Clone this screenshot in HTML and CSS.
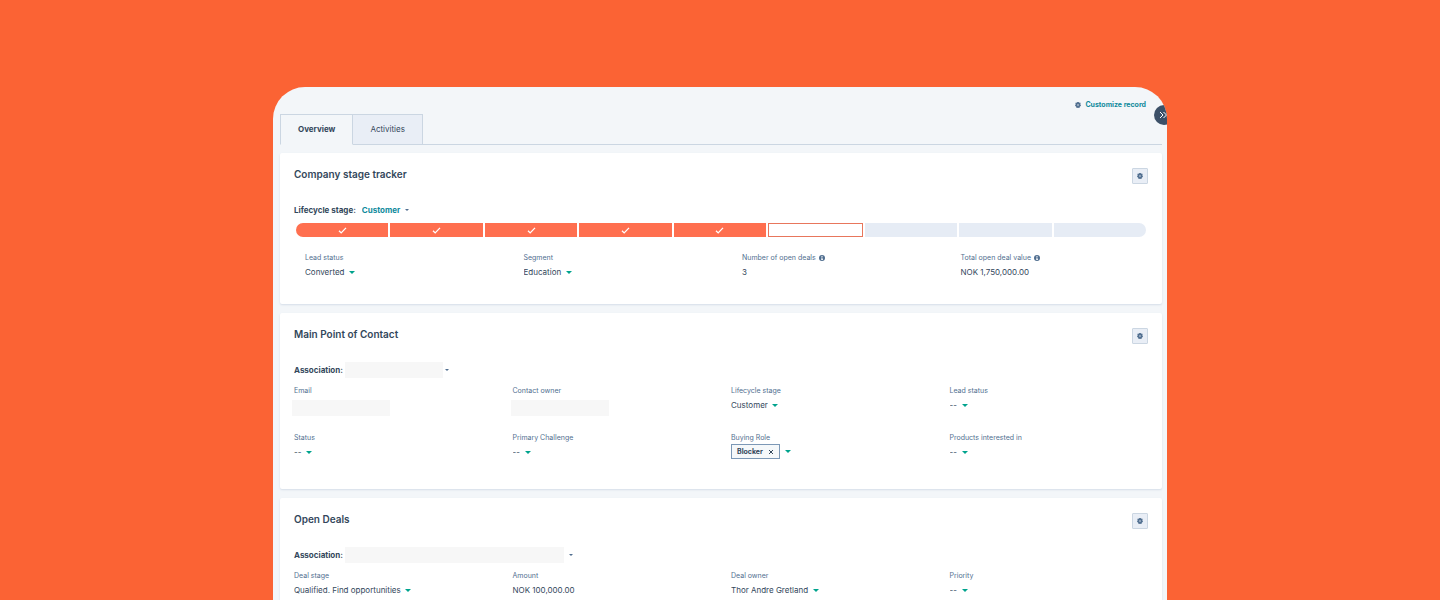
FILE: index.html
```
<!DOCTYPE html>
<html lang="en">
  <head>
    <meta charset="utf-8" />
    <title>Company record</title>
    <link rel="stylesheet" href="styles.css">
  </head>
  <body>
    <svg class="sprite" aria-hidden="true">
      <symbol id="gear" viewBox="0 0 16 16">
        <path fill="currentColor" fill-rule="evenodd" d="M6 0h4l.5 1.500 1.500.7 1.700-.6 1.400 2.400-1 1.500.5 1.500 1.400 1-1 3-1.500.5-.8 1.500.2 1.700L10 16l-1.300-1H7.300L6 16l-2.900-1.300.2-1.700-.8-1.500L1 11 0 8l1.400-1 .5-1.500-1-1.500 1.400-2.400 1.700.6 1.500-.7zM8 6a2 2 0 1 0 0 4 2 2 0 0 0 0-4z"/>
      </symbol>
      <symbol id="check" viewBox="0 0 10 8">
        <path fill="none" stroke="currentColor" stroke-width="1.500" d="M1 4.200 3.500 6.700 9 1"/>
      </symbol>
      <symbol id="info" viewBox="0 0 12 12">
        <circle cx="6" cy="6" r="6" fill="currentColor"/>
        <path fill="#fff" d="M5 2h2v2H5zM4.500 5H7v3.500h1V10H4.300V8.500H5v-2h-.5z"/>
      </symbol>
    </svg>

    <div class="hero">
      <main class="panel">
        <div class="toolbar">
          <a class="customize" href="#"><svg class="gear"><use href="#gear"/></svg>Customize record</a>
        </div>
        <button class="collapse" aria-label="Expand sidebar">
          <svg viewBox="0 0 8 8"><path d="M1 1l3 3-3 3M4.500 1l3 3-3 3"/></svg>
        </button>

        <nav class="tabs">
          <a class="tab active" href="#">Overview</a>
          <a class="tab" href="#">Activities</a>
        </nav>

        <section class="card stage-card">
          <div class="card-header">
            <h2>Company stage tracker</h2>
            <button class="settings" aria-label="Card settings"><svg class="gear"><use href="#gear"/></svg></button>
          </div>
          <div class="picker">
            <label for="stage">Lifecycle stage:</label>
            <span class="select link"><select id="stage"><option>Customer</option></select></span>
          </div>
          <div class="tracker">
            <span class="step done"><svg><use href="#check"/></svg></span>
            <span class="step done"><svg><use href="#check"/></svg></span>
            <span class="step done"><svg><use href="#check"/></svg></span>
            <span class="step done"><svg><use href="#check"/></svg></span>
            <span class="step done"><svg><use href="#check"/></svg></span>
            <span class="step current"></span>
            <span class="step"></span>
            <span class="step"></span>
            <span class="step"></span>
          </div>
          <div class="fields">
            <div class="field">
              <label for="lead">Lead status</label>
              <span class="select"><select id="lead"><option>Converted</option></select></span>
            </div>
            <div class="field">
              <label for="segment">Segment</label>
              <span class="select"><select id="segment"><option>Education</option></select></span>
            </div>
            <div class="field">
              <span class="name">Number of open deals <svg class="info"><use href="#info"/></svg></span>
              <span class="value">3</span>
            </div>
            <div class="field">
              <span class="name">Total open deal value <svg class="info"><use href="#info"/></svg></span>
              <span class="value">NOK 1,750,000.00</span>
            </div>
          </div>
        </section>

        <section class="card contact-card">
          <div class="card-header">
            <h2>Main Point of Contact</h2>
            <button class="settings" aria-label="Card settings"><svg class="gear"><use href="#gear"/></svg></button>
          </div>
          <div class="picker">
            <label for="contact">Association:</label>
            <span class="select blank"><select id="contact"></select></span>
          </div>
          <div class="fields">
            <div class="field">
              <label for="email">Email</label>
              <input id="email" type="email">
            </div>
            <div class="field">
              <label for="owner">Contact owner</label>
              <input id="owner" type="text">
            </div>
            <div class="field">
              <label for="contact-stage">Lifecycle stage</label>
              <span class="select"><select id="contact-stage"><option>Customer</option></select></span>
            </div>
            <div class="field">
              <label for="contact-lead">Lead status</label>
              <span class="select"><select id="contact-lead"><option>--</option></select></span>
            </div>
            <div class="field">
              <label for="status">Status</label>
              <span class="select"><select id="status"><option>--</option></select></span>
            </div>
            <div class="field">
              <label for="challenge">Primary Challenge</label>
              <span class="select"><select id="challenge"><option>--</option></select></span>
            </div>
            <div class="field">
              <span class="name">Buying Role</span>
              <span class="tags">
                <span class="tag">Blocker
                  <button aria-label="Remove Blocker"><svg viewBox="0 0 6 6"><path d="M1 1l4 4M5 1L1 5"/></svg></button>
                </span>
                <button class="caret" aria-label="Choose buying role"></button>
              </span>
            </div>
            <div class="field">
              <label for="products">Products interested in</label>
              <span class="select"><select id="products"><option>--</option></select></span>
            </div>
          </div>
        </section>

        <section class="card">
          <div class="card-header">
            <h2>Open Deals</h2>
            <button class="settings" aria-label="Card settings"><svg class="gear"><use href="#gear"/></svg></button>
          </div>
          <div class="picker">
            <label for="deal">Association:</label>
            <span class="select blank wide"><select id="deal"></select></span>
          </div>
          <div class="fields">
            <div class="field">
              <label for="deal-stage">Deal stage</label>
              <span class="select"><select id="deal-stage"><option>Qualified. Find opportunities</option></select></span>
            </div>
            <div class="field">
              <span class="name">Amount</span>
              <span class="value">NOK 100,000.00</span>
            </div>
            <div class="field">
              <label for="deal-owner">Deal owner</label>
              <span class="select"><select id="deal-owner"><option>Thor Andre Gretland</option></select></span>
            </div>
            <div class="field">
              <label for="priority">Priority</label>
              <span class="select"><select id="priority"><option>--</option></select></span>
            </div>
          </div>
        </section>
      </main>
    </div>
  </body>
</html>
```
FILE: styles.css
```
* {
  box-sizing: border-box;
}
body {
  margin: 0;
  font-family: Inter, "Liberation Sans", sans-serif;
  font-size: 8px;
  line-height: 16px;
  color: #33475b;
}
button, select, input {
  font: inherit;
  color: inherit;
  border: none;
  padding: 0;
  margin: 0;
  background: none;
}
button, select {
  cursor: pointer;
}
a {
  color: inherit;
  text-decoration: none;
}
.sprite {
  position: absolute;
  width: 0;
  height: 0;
}
.hero {
  height: 100vh;
  overflow: hidden;
  padding: 87px 273px 0;
  background: #fb6334;
}
.panel {
  position: relative;
  overflow: hidden;
  padding: 10px 5px 0 7px;
  border-radius: 32px 32px 0 0;
  background: #f3f6f9;
}

/* top bar */
.toolbar {
  display: flex;
  justify-content: flex-end;
  padding-right: 16px;
}
.customize {
  display: flex;
  align-items: center;
  gap: 4px;
  font-size: 7px;
  font-weight: 700;
  color: #108a9c;
}
.gear {
  width: 6px;
  height: 6px;
  color: #516f90;
}
.collapse {
  position: absolute;
  top: 18px;
  right: -7px;
  width: 20px;
  height: 20px;
  padding-left: 5px;
  border-radius: 50%;
  background: #3c5068;
  line-height: 0;
  text-align: left;
}
.collapse svg {
  width: 8px;
  height: 8px;
  fill: none;
  stroke: #fff;
}
.tabs {
  display: flex;
  margin-top: 1px;
  box-shadow: inset 0 -1px #cbd6e2;
}
.tab {
  height: 31px;
  padding: 0 17px;
  border: 1px solid #cbd6e2;
  border-left: none;
  line-height: 29px;
  background: #e9eef6;
}
.tab.active {
  border-left: 1px solid #cbd6e2;
  border-bottom-color: #f3f6f9;
  font-weight: 700;
  background: #f3f6f9;
}

/* cards */
.card {
  margin-top: 9px;
  padding: 15px 14px 24px;
  border-radius: 2px;
  background: #fff;
  box-shadow: 0 1px 2px #d5dee8;
}
.tabs + .card {
  margin-top: 8px;
}
.contact-card {
  padding-bottom: 29px;
}
.card-header {
  display: flex;
  justify-content: space-between;
  align-items: flex-start;
}
h2 {
  margin: 0;
  font-size: 10px;
  line-height: 12px;
  font-weight: 600;
}
.settings {
  display: flex;
  align-items: center;
  justify-content: center;
  width: 16px;
  height: 16px;
  border: 1px solid #cbd6e2;
  border-radius: 1px;
  background: #e9eef6;
}
.picker {
  display: flex;
  gap: 6px;
  margin-top: 18px;
  font-weight: 700;
}
.tracker {
  display: flex;
  gap: 2px;
  margin: 5px 2px 15px;
}
.step {
  display: flex;
  flex: 1;
  align-items: center;
  justify-content: center;
  height: 14px;
  background: #e6ecf5;
}
.step:first-child {
  border-radius: 7px 0 0 7px;
}
.step:last-child {
  border-radius: 0 7px 7px 0;
}
.step.done {
  color: #fff;
  background: #ff6f4f;
}
.step.current {
  border: 1px solid #e8765c;
  background: #fff;
}
.step svg {
  width: 9px;
  height: 7px;
}

/* property fields */
.fields {
  display: grid;
  grid-template-columns: repeat(4, 1fr);
  gap: 16px 20px;
  margin-top: 7px;
}
.stage-card .fields {
  margin: 0 -11px 0 11px;
}
.field {
  display: flex;
  flex-direction: column;
  align-items: flex-start;
}
.field label, .name {
  font-size: 7px;
  line-height: 12px;
  color: #516f90;
}
.info {
  width: 6px;
  height: 6px;
  margin-left: 1px;
  vertical-align: -1px;
}
.field input {
  width: 98px;
  height: 16px;
  margin: 3px 0 0 -2px;
  background: #f7f7f7;
}
.select {
  position: relative;
  display: inline-flex;
}
.select select {
  appearance: none;
  height: 16px;
  padding-right: 10px;
}
.select::after, .caret::after {
  content: "";
  border: 3px solid transparent;
  border-top-color: #00a38d;
  border-bottom: none;
}
.select::after {
  position: absolute;
  top: 7px;
  right: 0;
  pointer-events: none;
}
.link {
  color: #108a9c;
}
.link select {
  padding-right: 8px;
}
.link::after, .blank::after {
  border-width: 2px;
  border-top-color: #516f90;
}
.blank {
  width: 104px;
  margin-left: -4px;
}
.blank select {
  width: 98px;
  background: #f7f7f7;
}
.blank.wide {
  width: 228px;
}
.blank.wide select {
  width: 219px;
}
.tags {
  display: flex;
  align-items: center;
  gap: 5px;
}
.tag {
  display: flex;
  align-items: center;
  gap: 5px;
  height: 15px;
  padding: 0 5px;
  border: 1px solid #7c98b6;
  font-size: 7px;
  font-weight: 700;
  background: #f5f8fa;
}
.tag button, .caret {
  display: flex;
}
.tag svg {
  width: 6px;
  height: 6px;
  stroke: #33475b;
}
```
